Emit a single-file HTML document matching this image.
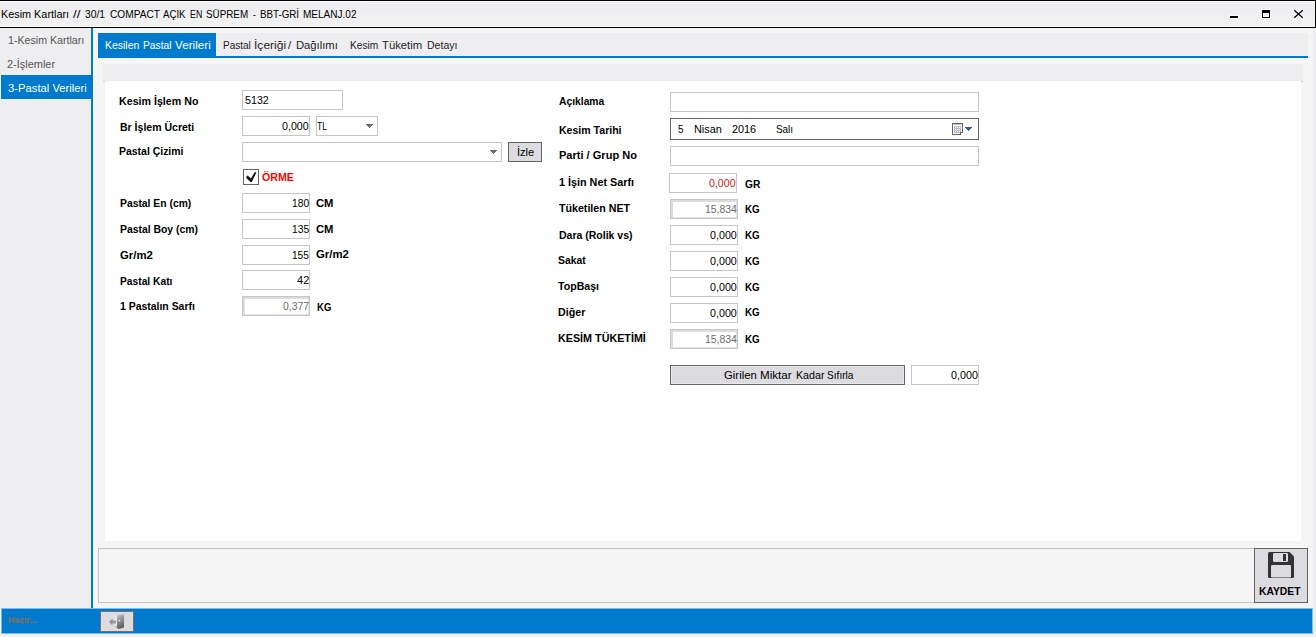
<!DOCTYPE html><html><head><meta charset="utf-8"><style>
html,body{margin:0;padding:0;width:1316px;height:637px;overflow:hidden;position:relative;font-family:'Liberation Sans',sans-serif}
.r{position:absolute;box-sizing:border-box}
.t{position:absolute;white-space:pre;transform-origin:0 0;line-height:12px;font-size:11px}
.b{font-weight:bold}
.hz{-webkit-text-stroke:0.35px #767170}
</style></head><body>

<div class="r" style="left:0px;top:0px;width:1316px;height:637px;background:#f5f5f5;"></div>
<div class="r" style="left:0px;top:0px;width:1316px;height:1px;background:#000;"></div>
<div class="r" style="left:0px;top:1px;width:1315px;height:1px;background:#fff;"></div>
<div class="r" style="left:0px;top:2px;width:1315px;height:11px;background:#eeeef0;"></div>
<div class="r" style="left:0px;top:13px;width:1315px;height:13px;background:#f0f0f0;"></div>
<div class="r" style="left:0px;top:26px;width:1315px;height:1px;background:#fff;"></div>
<div class="r" style="left:0px;top:27px;width:1316px;height:1px;background:#000;"></div>
<div class="r" style="left:1315px;top:0px;width:1px;height:28px;background:#000;"></div>
<div class="r" style="left:0px;top:28px;width:91px;height:580px;background:#eeeef0;"></div>
<div class="r" style="left:91px;top:28px;width:2px;height:580px;background:#007acc;"></div>
<div class="r" style="left:1313px;top:28px;width:3px;height:609px;background:#eeeef0;"></div>
<div class="r" style="left:1px;top:75px;width:90px;height:24px;background:#007acc;"></div>
<div class="r" style="left:98px;top:33px;width:1210px;height:23px;background:#eeeef0;"></div>
<div class="r" style="left:98px;top:56px;width:1210px;height:2px;background:#007acc;"></div>
<div class="r" style="left:98px;top:33px;width:118px;height:25px;background:#007acc;"></div>
<div class="r" style="left:103px;top:64px;width:1200px;height:17px;background:#eeeef0;"></div>
<div class="r" style="left:105px;top:81px;width:1196px;height:460px;background:#fff;"></div>
<div class="r" style="left:103px;top:81px;width:2px;height:1px;background:#c8cbe0;"></div>
<div class="r" style="left:1301px;top:81px;width:2px;height:1px;background:#c8cbe0;"></div>
<div class="r" style="left:98px;top:548px;width:1210px;height:55px;background:#f5f5f5;border:1px solid #c4c4c4;"></div>
<div class="r" style="left:1254px;top:548px;width:54px;height:55px;background:#dcdce0;border:1px solid #646464;"></div>
<div class="r" style="left:1px;top:608px;width:1312px;height:26px;background:#007acc;border:1px solid #80bce6;"></div>
<div class="r" style="left:0px;top:634px;width:1316px;height:3px;background:#f0f0f0;"></div>
<div class="r" style="left:100px;top:611px;width:34px;height:21px;background:#dcdce0;border:1px solid #7d6e66;"></div>
<div class="r" style="left:242px;top:90px;width:101px;height:20px;background:#fff;border:1px solid #c6c6c6;"></div>
<div class="r" style="left:242px;top:116px;width:68px;height:20px;background:#fff;border:1px solid #c6c6c6;"></div>
<div class="r" style="left:316px;top:116px;width:62px;height:20px;background:#fff;border:1px solid #c6c6c6;"></div>
<div class="r" style="left:242px;top:142px;width:260px;height:20px;background:#fff;border:1px solid #c6c6c6;"></div>
<div class="r" style="left:242px;top:193px;width:68px;height:20px;background:#fff;border:1px solid #c6c6c6;"></div>
<div class="r" style="left:242px;top:219px;width:68px;height:20px;background:#fff;border:1px solid #c6c6c6;"></div>
<div class="r" style="left:242px;top:245px;width:68px;height:20px;background:#fff;border:1px solid #c6c6c6;"></div>
<div class="r" style="left:242px;top:270px;width:68px;height:20px;background:#fff;border:1px solid #c6c6c6;"></div>
<div class="r" style="left:670px;top:92px;width:309px;height:20px;background:#fff;border:1px solid #c6c6c6;"></div>
<div class="r" style="left:670px;top:146px;width:309px;height:20px;background:#fff;border:1px solid #c6c6c6;"></div>
<div class="r" style="left:669px;top:173px;width:68px;height:20px;background:#fff;border:1px solid #c6c6c6;"></div>
<div class="r" style="left:670px;top:225px;width:68px;height:20px;background:#fff;border:1px solid #c6c6c6;"></div>
<div class="r" style="left:670px;top:251px;width:68px;height:20px;background:#fff;border:1px solid #c6c6c6;"></div>
<div class="r" style="left:670px;top:277px;width:68px;height:20px;background:#fff;border:1px solid #c6c6c6;"></div>
<div class="r" style="left:670px;top:303px;width:68px;height:20px;background:#fff;border:1px solid #c6c6c6;"></div>
<div class="r" style="left:911px;top:365px;width:68px;height:20px;background:#fff;border:1px solid #c6c6c6;"></div>
<div class="r" style="left:242px;top:296px;width:68px;height:20px;background:#fff;border:1px solid #c6c6c6;box-shadow:inset 2px 2px 0 #dcdcdc, inset -1px -1px 0 #e4e4e4;"></div>
<div class="r" style="left:670px;top:199px;width:68px;height:20px;background:#fff;border:1px solid #c6c6c6;box-shadow:inset 2px 2px 0 #dcdcdc, inset -1px -1px 0 #e4e4e4;"></div>
<div class="r" style="left:670px;top:329px;width:68px;height:20px;background:#fff;border:1px solid #c6c6c6;box-shadow:inset 2px 2px 0 #dcdcdc, inset -1px -1px 0 #e4e4e4;"></div>
<div class="r" style="left:670px;top:118px;width:309px;height:22px;background:#fff;border:1px solid #646464;"></div>
<div class="r" style="left:508px;top:142px;width:34px;height:20px;background:#dcdce0;border:1px solid #646464;"></div>
<div class="r" style="left:670px;top:365px;width:235px;height:20px;background:#dcdce0;border:1px solid #646464;box-shadow:inset 1px 1px 0 #e8e8ec, inset -1px -1px 0 #e8e8ec;"></div>
<div class="r" style="left:243px;top:169px;width:16px;height:16px;background:#fff;border:1px solid #646464;"></div>
<svg class="ic" style="position:absolute;left:0;top:0;width:1316px;height:637px;overflow:visible" width="1316" height="637" viewBox="0 0 1316 637">
 <!-- window controls -->
 <g shape-rendering="crispEdges">
  <rect x="1229" y="15" width="10" height="4" fill="#fff" opacity="0.7"/>
  <rect x="1230" y="16" width="8" height="2" fill="#000"/>
  <rect x="1261" y="9" width="10" height="10" fill="#fff" opacity="0.7"/>
  <rect x="1262" y="10" width="8" height="8" fill="#000"/>
  <rect x="1263" y="13" width="6" height="4" fill="#fff"/>
  <rect x="1264" y="14" width="4" height="2" fill="#f0f0f0"/>
 </g>
 <g stroke-linecap="square">
  <path d="M1294.8 10.8 L1302.2 17.2 M1302.2 10.8 L1294.8 17.2" stroke="#fff" stroke-width="3" opacity="0.8"/>
  <path d="M1294.8 10.8 L1302.2 17.2 M1302.2 10.8 L1294.8 17.2" stroke="#000" stroke-width="1.4"/>
 </g>
 <!-- combo arrows -->
 <g shape-rendering="crispEdges" fill="#6d6d6d">
  <rect x="366" y="124" width="7" height="1"/><rect x="367" y="125" width="5" height="1"/><rect x="368" y="126" width="3" height="1"/><rect x="369" y="127" width="1" height="1"/>
  <rect x="490" y="150" width="7" height="1"/><rect x="491" y="151" width="5" height="1"/><rect x="492" y="152" width="3" height="1"/><rect x="493" y="153" width="1" height="1"/>
 </g>
 <g shape-rendering="crispEdges" fill="#3d5a8c">
  <rect x="965" y="127" width="7" height="1"/><rect x="966" y="128" width="5" height="1"/><rect x="967" y="129" width="3" height="1"/><rect x="968" y="130" width="1" height="1"/>
 </g>
 <!-- calendar -->
 <g shape-rendering="crispEdges">
  <path d="M952 123 H963 V133 H961 V135 H952 Z" fill="#6e6260"/>
  <path d="M953 124 H962 V132 H960 V134 H953 Z" fill="#fff"/>
  <rect x="954" y="124" width="7" height="1" fill="#b8bdca"/>
  <rect x="954" y="126" width="7" height="7" fill="#b8bdca"/>
  <g fill="#fff">
   <rect x="955" y="127" width="1" height="1"/><rect x="957" y="127" width="1" height="1"/><rect x="959" y="127" width="1" height="1"/>
   <rect x="955" y="129" width="1" height="1"/><rect x="957" y="129" width="1" height="1"/><rect x="959" y="129" width="1" height="1"/>
   <rect x="955" y="131" width="1" height="1"/><rect x="957" y="131" width="1" height="1"/><rect x="959" y="131" width="1" height="1"/>
  </g>
  <rect x="960" y="132" width="1" height="1" fill="#6e6260"/>
 </g>
 <!-- checkmark -->
 <path d="M246.6 176.0 L247.8 175.4 L250.9 178.6 L254.8 172.0 L256.3 172.6 L251.8 182.0 L250.6 182.0 L246.4 178.2 Z" fill="#141414"/>
 <!-- floppy -->
 <path d="M1270 552 H1289.5 L1294 556.5 V576.5 Q1294 578 1292.5 578 H1269.5 Q1268 578 1268 576.5 V553.5 Q1268 552 1269.5 552 Z" fill="#333"/>
 <rect x="1273" y="553" width="15" height="9" rx="1.2" fill="#dcdbe0"/>
 <rect x="1283" y="554" width="3" height="7" fill="#333"/>
 <rect x="1271" y="565" width="20" height="12.5" rx="1.2" fill="#dcdbe0"/>
 <!-- exit door -->
 <defs><linearGradient id="dg" x1="0" y1="0" x2="0.3" y2="1"><stop offset="0" stop-color="#c4c4c4"/><stop offset="1" stop-color="#5e5e5e"/></linearGradient>
 <linearGradient id="ag" x1="0" y1="0" x2="1" y2="0"><stop offset="0" stop-color="#8a8a8a"/><stop offset="1" stop-color="#a4a4a4"/></linearGradient></defs>
 <path d="M117 615.5 L120 614.5 H124 V627.5 L119 629 H117 Z" fill="url(#dg)"/>
 <path d="M116 616 V627.5 L118 629" fill="none" stroke="#f4f4f4" stroke-width="1"/>
 <path d="M115.5 626 L117.5 628.5" fill="none" stroke="#8a8a8a" stroke-width="1"/>
 <rect x="119" y="620" width="1.2" height="1.2" fill="#fff"/>
 <path d="M109 622 L112.5 618.6 V620.4 H116 V623.6 H112.5 V625.4 Z" fill="url(#ag)"/>
</svg>

<div class="t" style="left:1.40px;top:8px;color:#000;transform:scaleX(0.9853);">Kesim Kartları</div>
<div class="t" style="left:72.80px;top:8px;color:#000;transform:scaleX(1.2188);">//</div>
<div class="t" style="left:84.50px;top:8px;color:#000;transform:scaleX(0.9393);">30/1</div>
<div class="t" style="left:109.60px;top:8px;color:#000;transform:scaleX(0.9235);">COMPACT</div>
<div class="t" style="left:163.00px;top:8px;color:#000;transform:scaleX(0.8771);">AÇIK</div>
<div class="t" style="left:189.80px;top:8px;color:#000;transform:scaleX(0.8020);">EN</div>
<div class="t" style="left:206.30px;top:8px;color:#000;transform:scaleX(0.8956);">SÜPREM</div>
<div class="t" style="left:252.80px;top:8px;color:#000;transform:scaleX(0.7500);">-</div>
<div class="t" style="left:259.80px;top:8px;color:#000;transform:scaleX(0.8874);">BBT-GRİ</div>
<div class="t" style="left:302.50px;top:8px;color:#000;transform:scaleX(0.9117);">MELANJ.02</div>
<div class="t" style="left:7.90px;top:34px;color:#555555;transform:scaleX(0.9670);">1-Kesim Kartları</div>
<div class="t" style="left:7.20px;top:58px;color:#555555;transform:scaleX(0.9954);">2-İşlemler</div>
<div class="t" style="left:7.70px;top:82px;color:#fff;transform:scaleX(1.0223);">3-Pastal Verileri</div>
<div class="t" style="left:104.80px;top:39px;color:#fff;transform:scaleX(0.9511);">Kesilen</div>
<div class="t" style="left:143.40px;top:39px;color:#fff;transform:scaleX(0.9327);">Pastal</div>
<div class="t" style="left:175.20px;top:39px;color:#fff;transform:scaleX(1.0669);">Verileri</div>
<div class="t" style="left:222.60px;top:39px;color:#1e1e1e;transform:scaleX(0.9094);">Pastal</div>
<div class="t" style="left:254.40px;top:39px;color:#1e1e1e;transform:scaleX(1.0968);">İçeriği</div>
<div class="t" style="left:288.10px;top:39px;color:#1e1e1e;transform:scaleX(1.0250);">/</div>
<div class="t" style="left:295.60px;top:39px;color:#1e1e1e;transform:scaleX(1.0220);">Dağılımı</div>
<div class="t" style="left:349.70px;top:39px;color:#1e1e1e;transform:scaleX(0.9277);">Kesim</div>
<div class="t" style="left:382.00px;top:39px;color:#1e1e1e;transform:scaleX(1.0268);">Tüketim</div>
<div class="t" style="left:426.80px;top:39px;color:#1e1e1e;transform:scaleX(0.9579);">Detayı</div>
<div class="t b" style="left:118.60px;top:95px;color:#000;transform:scaleX(0.9696);">Kesim İşlem No</div>
<div class="t b" style="left:119.80px;top:121px;color:#000;transform:scaleX(0.9563);">Br İşlem Ücreti</div>
<div class="t b" style="left:119.40px;top:145px;color:#000;transform:scaleX(0.9498);">Pastal Çizimi</div>
<div class="t b" style="left:119.60px;top:197px;color:#000;transform:scaleX(0.9404);">Pastal En (cm)</div>
<div class="t b" style="left:119.60px;top:223px;color:#000;transform:scaleX(0.9449);">Pastal Boy (cm)</div>
<div class="t b" style="left:120.00px;top:249px;color:#000;transform:scaleX(1.0324);">Gr/m2</div>
<div class="t b" style="left:119.80px;top:275px;color:#000;transform:scaleX(0.9326);">Pastal Katı</div>
<div class="t b" style="left:120.00px;top:300px;color:#000;transform:scaleX(0.9491);">1 Pastalın Sarfı</div>
<div class="t" style="left:245.30px;top:94px;color:#000;transform:scaleX(0.9732);">5132</div>
<div class="t" style="left:282.30px;top:120px;color:#000;transform:scaleX(0.9705);">0,000</div>
<div class="t" style="left:316.80px;top:120px;color:#000;transform:scaleX(0.7862);">TL</div>
<div class="t" style="left:291.80px;top:197px;color:#000;transform:scaleX(0.9377);">180</div>
<div class="t" style="left:291.80px;top:223px;color:#000;transform:scaleX(0.9377);">135</div>
<div class="t" style="left:292.20px;top:249px;color:#000;transform:scaleX(0.9158);">155</div>
<div class="t" style="left:296.80px;top:274px;color:#000;transform:scaleX(1.0027);">42</div>
<div class="t" style="left:282.50px;top:300px;color:#6d6d6d;transform:scaleX(0.9486);">0,377</div>
<div class="t b" style="left:316.00px;top:197px;color:#000;transform:scaleX(1.0210);">CM</div>
<div class="t b" style="left:316.00px;top:223px;color:#000;transform:scaleX(1.0210);">CM</div>
<div class="t b" style="left:316.00px;top:248px;color:#000;transform:scaleX(1.0324);">Gr/m2</div>
<div class="t b" style="left:316.70px;top:301px;color:#000;transform:scaleX(0.8655);">KG</div>
<div class="t b" style="left:262.00px;top:171px;color:#ff0000;transform:scaleX(0.9675);">ÖRME</div>
<div class="t" style="left:516.69px;top:146px;color:#000;transform:scaleX(1.0062);">İzle</div>
<div class="t b" style="left:558.50px;top:95px;color:#000;transform:scaleX(0.9372);">Açıklama</div>
<div class="t b" style="left:558.50px;top:124px;color:#000;transform:scaleX(0.9593);">Kesim Tarihi</div>
<div class="t b" style="left:558.50px;top:149px;color:#000;transform:scaleX(1.0039);">Parti / Grup No</div>
<div class="t b" style="left:558.50px;top:176px;color:#000;transform:scaleX(0.9822);">1 İşin Net Sarfı</div>
<div class="t b" style="left:558.50px;top:202px;color:#000;transform:scaleX(0.9684);">Tüketilen NET</div>
<div class="t b" style="left:558.50px;top:229px;color:#000;transform:scaleX(0.9539);">Dara (Rolik vs)</div>
<div class="t b" style="left:558.20px;top:254px;color:#000;transform:scaleX(0.9397);">Sakat</div>
<div class="t b" style="left:558.00px;top:280px;color:#000;transform:scaleX(0.9642);">TopBaşı</div>
<div class="t b" style="left:558.00px;top:306px;color:#000;transform:scaleX(0.9710);">Diğer</div>
<div class="t b" style="left:558.00px;top:332px;color:#000;transform:scaleX(0.9780);">KESİM TÜKETİMİ</div>
<div class="t" style="left:678.40px;top:123px;color:#000;transform:scaleX(0.9000);">5</div>
<div class="t" style="left:693.70px;top:123px;color:#000;transform:scaleX(0.9891);">Nisan</div>
<div class="t" style="left:732.00px;top:123px;color:#000;transform:scaleX(0.9855);">2016</div>
<div class="t" style="left:775.50px;top:123px;color:#000;transform:scaleX(0.8995);">Salı</div>
<div class="t" style="left:709.00px;top:177px;color:#d01c1c;transform:scaleX(0.9668);">0,000</div>
<div class="t" style="left:704.90px;top:203px;color:#6d6d6d;transform:scaleX(0.9485);">15,834</div>
<div class="t" style="left:710.10px;top:229px;color:#000;transform:scaleX(0.9741);">0,000</div>
<div class="t" style="left:710.10px;top:255px;color:#000;transform:scaleX(0.9741);">0,000</div>
<div class="t" style="left:710.10px;top:281px;color:#000;transform:scaleX(0.9741);">0,000</div>
<div class="t" style="left:710.10px;top:307px;color:#000;transform:scaleX(0.9741);">0,000</div>
<div class="t" style="left:704.90px;top:333px;color:#6d6d6d;transform:scaleX(0.9485);">15,834</div>
<div class="t b" style="left:744.90px;top:178px;color:#000;transform:scaleX(0.9302);">GR</div>
<div class="t b" style="left:745.30px;top:203px;color:#000;transform:scaleX(0.8906);">KG</div>
<div class="t b" style="left:745.30px;top:229px;color:#000;transform:scaleX(0.8906);">KG</div>
<div class="t b" style="left:745.30px;top:255px;color:#000;transform:scaleX(0.8906);">KG</div>
<div class="t b" style="left:745.30px;top:281px;color:#000;transform:scaleX(0.8906);">KG</div>
<div class="t b" style="left:745.30px;top:306px;color:#000;transform:scaleX(0.8906);">KG</div>
<div class="t b" style="left:745.30px;top:333px;color:#000;transform:scaleX(0.8906);">KG</div>
<div class="t" style="left:723.50px;top:369px;color:#000;transform:scaleX(1.0326);">Girilen</div>
<div class="t" style="left:759.90px;top:369px;color:#000;transform:scaleX(1.0535);">Miktar</div>
<div class="t" style="left:795.50px;top:369px;color:#000;transform:scaleX(0.9700);">Kadar</div>
<div class="t" style="left:827.20px;top:369px;color:#000;transform:scaleX(0.9219);">Sıfırla</div>
<div class="t" style="left:951.20px;top:369px;color:#000;transform:scaleX(0.9778);">0,000</div>
<div class="t b" style="left:1259.40px;top:585px;color:#000;transform:scaleX(0.9394);">KAYDET</div>
<div class="t b hz" style="left:7.80px;top:615px;color:#767170;transform:scaleX(0.8996) scaleY(0.875);font-size:10px;line-height:11px;">Hazır...</div>
</body></html>
